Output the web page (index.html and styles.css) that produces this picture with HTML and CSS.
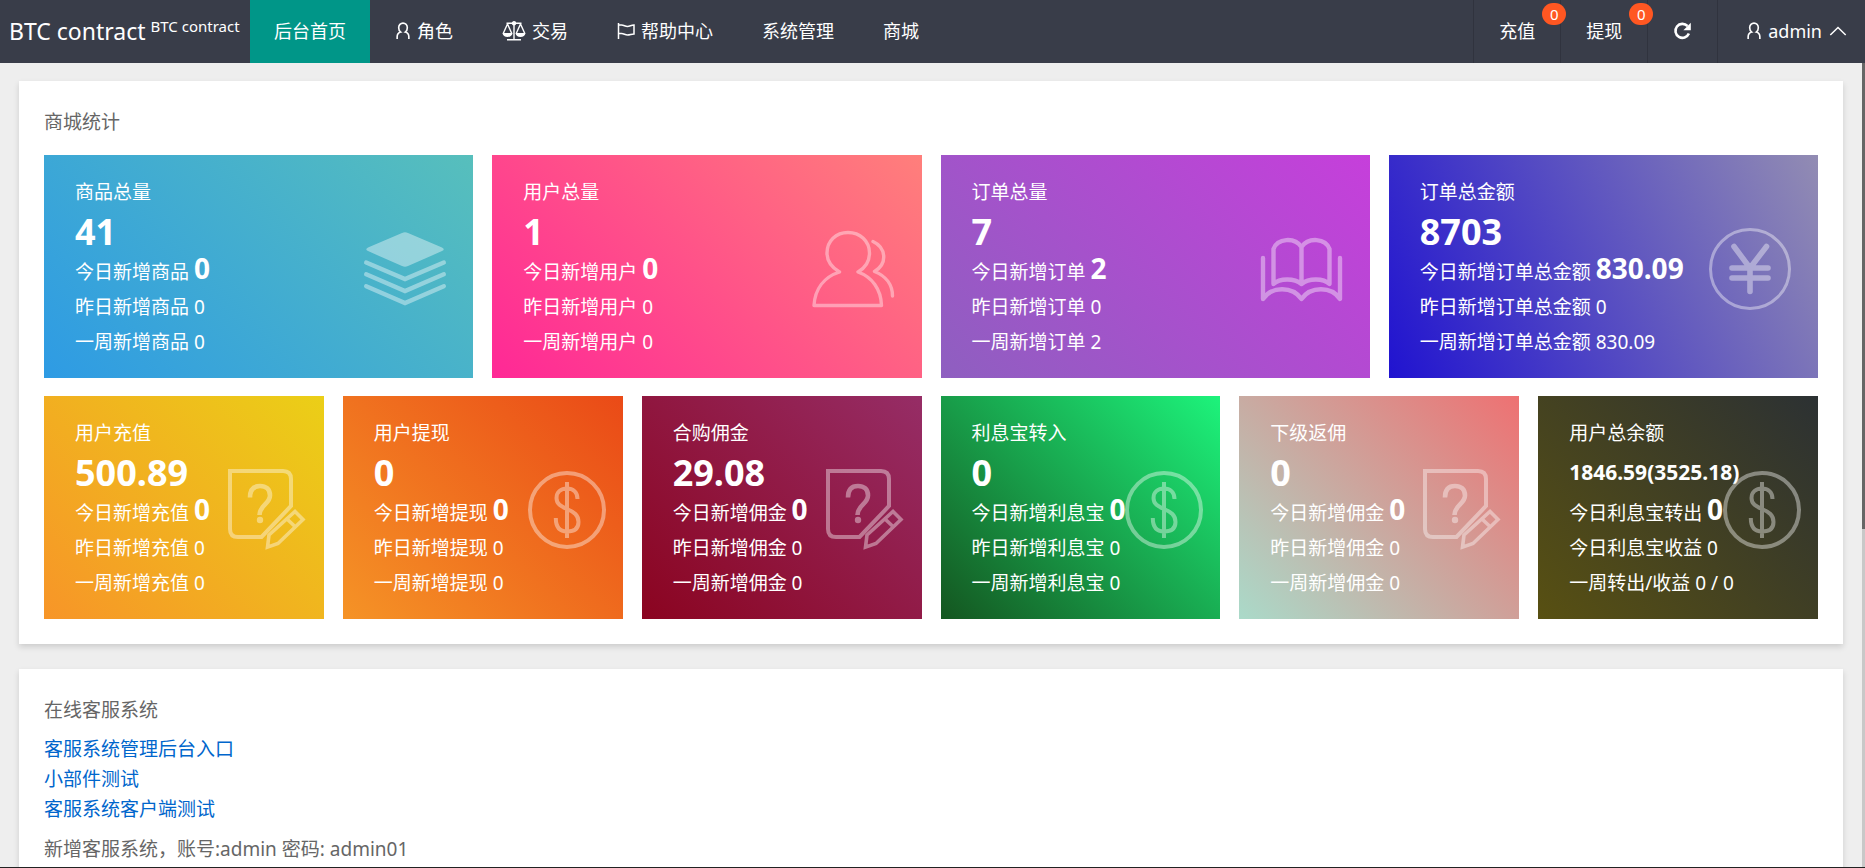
FILE: index.html
```html
<!DOCTYPE html>
<html lang="zh-CN">
<head>
<meta charset="utf-8">
<title>BTC contract</title>
<link rel="stylesheet" href="styles.css">
</head>
<body>
<svg class="sprite" aria-hidden="true">
  <symbol id="i-user" viewBox="0 0 16 20"><path d="M1.5 19v-2.500C1.500 13.300 3.300 11.800 5.500 11.200 3.800 10 3.200 8.300 3.200 6.300 3.200 3.300 5.300 1.200 8 1.200s4.800 2.100 4.800 5.100c0 2-.6 3.700-2.300 4.900 2.200.6 4 2.100 4 5.300V19" fill="none" stroke="currentColor" stroke-width="1.800"/></symbol>
  <symbol id="i-scale" viewBox="0 0 24 20"><g fill="none" stroke="currentColor" stroke-width="1.400"><path d="M4.500 2.200h15M12 1v17"/><path d="M5.500 3L1.200 12.500M5.500 3l4.300 9.500M18.500 3l-4.300 9.500M18.500 3l4.300 9.500"/><circle cx="12" cy="2.200" r="1.500"/></g><path d="M.5 12h10c-.3 2.600-2.300 4-5 4s-4.700-1.400-5-4zM13.500 12h10c-.3 2.600-2.300 4-5 4s-4.700-1.400-5-4zM5 18h14v1.600H5z" fill="currentColor"/></symbol>
  <symbol id="i-flag" viewBox="0 0 18 18"><path d="M1.500 1v16M1.500 3h3C7 3 8 4.500 10.500 4.500 13 4.500 14 3 17 3v9c-2.500 0-4 1-6.500 1S7 11.500 4.500 11.500h-3" fill="none" stroke="currentColor" stroke-width="1.500"/></symbol>
  <symbol id="i-refresh" viewBox="0 0 18 18"><path d="M15.400 11.600A7 7 0 1 1 14 4" fill="none" stroke="currentColor" stroke-width="2.600"/><path d="M17.300.8v7.400H9.900z" fill="currentColor"/></symbol>
  <symbol id="i-up" viewBox="0 0 18 12"><path d="M1.300 10L9 2.500l7.700 7.500" fill="none" stroke="currentColor" stroke-width="1.500"/></symbol>
  <symbol id="i-stack" viewBox="0 0 100 100"><path d="M47 14q3-1.500 6 0l34 14.500q3.500 1.800 0 3.600L53 47q-3 1.500-6 0L13 32.100q-3.500-1.800 0-3.600z" fill="currentColor"/><path d="M11.200 43.500L50 60l38.800-16.500M11.200 55.300L50 72l38.800-16.700M11.200 67.200L50 84l38.800-16.800" fill="none" stroke="currentColor" stroke-width="4.400" stroke-linecap="round"/></symbol>
  <symbol id="i-users" viewBox="0 0 100 100"><path d="M35.500 53C27 48 23 42 23 34c0-12 9-20.500 21-20.500S65.500 22 65.500 34c0 8-4.500 15-11.500 19 14 5 23 17 23.500 33.500H10C11 70 20 58 35.500 53M69 22.500c13 6 15 22 1.500 30C82 57 88.500 66 88.500 77" fill="none" stroke="currentColor" stroke-width="3.400" stroke-linecap="round" stroke-linejoin="round"/></symbol>
  <symbol id="i-book" viewBox="0 0 100 100"><path d="M11 39v41C19.500 67 40.500 67 49.500 80c9-13 30-13 38.500 0V39M49.500 28C42.500 18 25.500 19 21.500 30v35c6-6 21-6 28 0 7-6 22-6 28 0V30C73.500 19 56.500 18 49.500 28v37" fill="none" stroke="currentColor" stroke-width="4.400" stroke-linecap="round" stroke-linejoin="round"/></symbol>
  <symbol id="i-yen" viewBox="0 0 100 100"><g fill="none" stroke="currentColor" stroke-linecap="round"><circle cx="50" cy="50" r="39.500" stroke-width="3"/><path d="M34 27.500L50 49l16.500-21.500M32 49h36M32 59h36M50 49v23.500" stroke-width="5.600"/></g></symbol>
  <symbol id="i-doc" viewBox="0 0 100 100"><g fill="none" stroke="currentColor" stroke-width="4"><path d="M43.500 77H20q-8 0-8-8V11h53q8 0 8 8v27z"/><path d="M32 37.500C32 29 36 26 42 26s10 3 10 9.500C52 44 41.500 45 41.500 55" stroke-width="4.600"/><path d="M51 75L77 51.500l8 8L60 83.500l-10.500 3.700zM69 59l8.500 8" stroke-width="3.600"/></g><circle cx="42" cy="60" r="3.200" fill="currentColor"/></symbol>
  <symbol id="i-dollar" viewBox="0 0 100 100"><g fill="none" stroke="currentColor" stroke-width="4"><circle cx="50" cy="50" r="37"/><path d="M50 22v56M60.500 39C60.500 32 56 28.500 50 28.500S39.500 32 39.500 38 44 46.500 50 49c7 3 11.500 6 11.500 13S57 71.500 50 71.500 38.800 68 38.800 58"/></g></symbol>
</svg>

<header class="header">
  <a class="logo" href="#">BTC contract <sup>BTC contract</sup></a>
  <nav class="nav">
    <a class="nav-item active" href="#">后台首页</a>
    <a class="nav-item" href="#"><svg class="ic ic-user"><use href="#i-user"/></svg>角色</a>
    <a class="nav-item" href="#"><svg class="ic ic-scale"><use href="#i-scale"/></svg>交易</a>
    <a class="nav-item" href="#"><svg class="ic ic-flag"><use href="#i-flag"/></svg>帮助中心</a>
    <a class="nav-item" href="#">系统管理</a>
    <a class="nav-item" href="#">商城</a>
  </nav>
  <div class="tools">
    <a class="tool" href="#">充值<span class="badge">0</span></a>
    <a class="tool" href="#">提现<span class="badge">0</span></a>
    <button class="tool tool-refresh" type="button" aria-label="刷新"><svg class="ic ic-refresh"><use href="#i-refresh"/></svg></button>
    <a class="tool tool-user" href="#"><svg class="ic ic-user"><use href="#i-user"/></svg>admin<svg class="ic ic-up"><use href="#i-up"/></svg></a>
  </div>
</header>

<div class="viewport">
  <main class="main">
    <section class="card">
      <h2 class="card-title">商城统计</h2>
      <div class="grid grid-4">
        <article class="tile t-blue"><h3>商品总量</h3><p class="total">41</p><p>今日新增商品 <b>0</b></p><p>昨日新增商品 0</p><p>一周新增商品 0</p><svg class="pic"><use href="#i-stack"/></svg></article>
        <article class="tile t-pink"><h3>用户总量</h3><p class="total">1</p><p>今日新增用户 <b>0</b></p><p>昨日新增用户 0</p><p>一周新增用户 0</p><svg class="pic"><use href="#i-users"/></svg></article>
        <article class="tile t-purple"><h3>订单总量</h3><p class="total">7</p><p>今日新增订单 <b>2</b></p><p>昨日新增订单 0</p><p>一周新增订单 2</p><svg class="pic"><use href="#i-book"/></svg></article>
        <article class="tile t-indigo"><h3>订单总金额</h3><p class="total">8703</p><p>今日新增订单总金额 <b>830.09</b></p><p>昨日新增订单总金额 0</p><p>一周新增订单总金额 830.09</p><svg class="pic"><use href="#i-yen"/></svg></article>
      </div>
      <div class="grid grid-6">
        <article class="tile t-yellow"><h3>用户充值</h3><p class="total">500.89</p><p>今日新增充值 <b>0</b></p><p>昨日新增充值 0</p><p>一周新增充值 0</p><svg class="pic"><use href="#i-doc"/></svg></article>
        <article class="tile t-orange"><h3>用户提现</h3><p class="total">0</p><p>今日新增提现 <b>0</b></p><p>昨日新增提现 0</p><p>一周新增提现 0</p><svg class="pic"><use href="#i-dollar"/></svg></article>
        <article class="tile t-wine"><h3>合购佣金</h3><p class="total">29.08</p><p>今日新增佣金 <b>0</b></p><p>昨日新增佣金 0</p><p>一周新增佣金 0</p><svg class="pic"><use href="#i-doc"/></svg></article>
        <article class="tile t-green"><h3>利息宝转入</h3><p class="total">0</p><p>今日新增利息宝 <b>0</b></p><p>昨日新增利息宝 0</p><p>一周新增利息宝 0</p><svg class="pic"><use href="#i-dollar"/></svg></article>
        <article class="tile t-rose"><h3>下级返佣</h3><p class="total">0</p><p>今日新增佣金 <b>0</b></p><p>昨日新增佣金 0</p><p>一周新增佣金 0</p><svg class="pic"><use href="#i-doc"/></svg></article>
        <article class="tile t-olive"><h3>用户总余额</h3><p class="total total-small">1846.59(3525.18)</p><p>今日利息宝转出 <b>0</b></p><p>今日利息宝收益 0</p><p>一周转出/收益 0 / 0</p><svg class="pic"><use href="#i-dollar"/></svg></article>
      </div>
    </section>
    <section class="card">
      <h2 class="card-title card-title-tight">在线客服系统</h2>
      <ul class="links">
        <li><a href="#">客服系统管理后台入口</a></li>
        <li><a href="#">小部件测试</a></li>
        <li><a href="#">客服系统客户端测试</a></li>
      </ul>
      <p class="note">新增客服系统，账号:admin 密码: admin01</p>
    </section>
  </main>
  <div class="scrollbar"><div class="thumb"></div></div>
</div>
</body>
</html>
```
FILE: styles.css
```css
* { box-sizing: border-box; }

body {
  margin: 0;
  height: 100vh;
  display: flex;
  flex-direction: column;
  overflow: hidden;
  background: #eee;
  border-bottom: 1px solid #222;
  color: #666;
  font: 19px/30px "Noto Sans", "Noto Sans CJK SC", sans-serif;
}

h2, h3, p, ul { margin: 0; padding: 0; font-size: inherit; font-weight: normal; }
a { color: inherit; text-decoration: none; }
.sprite { display: none; }

/* header */
.header {
  display: flex;
  flex: none;
  height: 63px;
  background: #393d49;
  color: #fff;
  font-size: 18px;
}
.logo {
  display: flex;
  align-items: center;
  gap: 5px;
  flex: none;
  width: 250px;
  padding: 0 0 2px 9px;
  font-size: 23px;
  white-space: nowrap;
}
.logo sup { font-size: 15px; line-height: 20px; padding-bottom: 10px; }
.nav { display: flex; gap: 1px; }
.nav-item {
  display: flex;
  align-items: center;
  gap: 6px;
  padding: 0 24px 2px;
}
.nav-item.active { background: #009688; }
.tools { display: flex; margin-left: auto; }
.tool {
  position: relative;
  display: flex;
  align-items: center;
  gap: 6px;
  padding: 0 25px 2px;
  border: 0;
  border-left: 1px solid #30333e;
  background: none;
  color: inherit;
  font: inherit;
}
.tool-user { padding: 0 17px 2px 28px; }
.badge {
  position: absolute;
  top: 3px;
  right: -6px;
  width: 24px;
  border-radius: 11px;
  background: #ff5722;
  font-size: 15px;
  line-height: 22px;
  text-align: center;
  z-index: 1;
}
.ic { display: block; flex: none; }
.ic-user { width: 16px; height: 18px; }
.ic-scale { width: 24px; height: 20px; }
.ic-flag { width: 18px; height: 18px; }
.ic-refresh { width: 19px; height: 18px; }
.ic-up { width: 20px; height: 12px; }

/* scrolling area */
.viewport { display: flex; flex: 1; min-height: 0; }
.main { flex: 1; min-width: 0; overflow: hidden; padding: 18px 19px 0; }
.scrollbar { flex: none; width: 3px; background: #c8c8c8; }
.thumb { height: 58%; background: #666; }

/* cards */
.card {
  margin-bottom: 25px;
  padding: 26px 25px 25px;
  background: #fff;
  box-shadow: 0 3px 6px rgba(0, 0, 0, .14);
}
.card-title { margin-bottom: 18px; }
.card-title-tight { margin-bottom: 9px; }
.grid { display: grid; gap: 19px; }
.grid-4 { grid-template-columns: repeat(4, 1fr); margin-bottom: 18px; }
.grid-6 { grid-template-columns: repeat(6, 1fr); }

.tile {
  position: relative;
  padding: 20px 0 18px 31px;
  color: #fff;
  line-height: 35px;
  white-space: nowrap;
}
.tile p { height: 35px; }
.tile b { font-size: 28px; line-height: 20px; }
.tile .total { height: 45px; font-size: 36px; font-weight: bold; line-height: 43px; }
.tile .total-small { font-size: 21px; }
.pic { position: absolute; top: 64px; right: 18px; width: 100px; height: 100px; opacity: .4; }
.grid-6 .pic { right: 6px; }

.t-blue { background: linear-gradient(45deg, #2e9be4, #57bfbc); }
.t-pink { background: linear-gradient(45deg, #ff2896, #ff7f7b); }
.t-purple { background: linear-gradient(45deg, #8e5fc0, #c63fdb); }
.t-indigo { background: linear-gradient(65deg, #2013d0, #928cb3); }
.t-yellow { background: linear-gradient(45deg, #f79528, #ebcf17); }
.t-orange { background: linear-gradient(45deg, #f59326, #ea4a17); }
.t-wine { background: linear-gradient(45deg, #8b0420, #962d66); }
.t-green { background: linear-gradient(45deg, #145620, #1df37b); }
.t-rose { background: linear-gradient(45deg, #aadac9, #ee7172); }
.t-olive { background: linear-gradient(45deg, #585012, #2c3133); }

.links { list-style: none; color: #06c; }
.note { margin-top: 10px; }
```
